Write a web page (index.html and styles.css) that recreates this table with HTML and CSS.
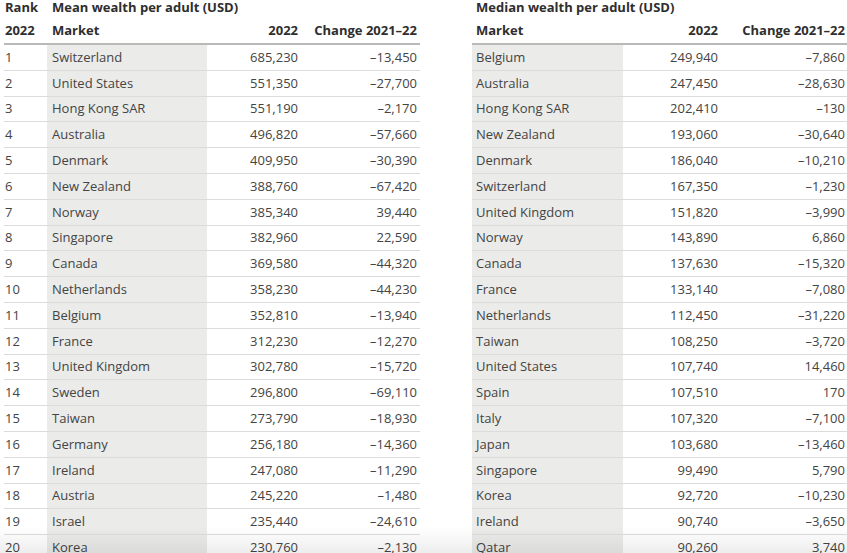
FILE: index.html
```html
<!DOCTYPE html>
<html lang="en">
<head>
<meta charset="utf-8">
<title>Wealth per adult</title>
<link rel="stylesheet" href="styles.css">
</head>
<body>
<div class="page">
  <section class="tbl tbl-mean">
    <div class="row title"><div class="c rank">Rank</div><div class="c span">Mean wealth per adult (USD)</div></div>
    <div class="row head"><div class="c rank">2022</div><div class="c mk">Market</div><div class="c num">2022</div><div class="c num">Change 2021–22</div></div>
    <div class="row"><div class="c rank">1</div><div class="c mk grey">Switzerland</div><div class="c num">685,230</div><div class="c num">–13,450</div></div>
    <div class="row"><div class="c rank">2</div><div class="c mk grey">United States</div><div class="c num">551,350</div><div class="c num">–27,700</div></div>
    <div class="row"><div class="c rank">3</div><div class="c mk grey">Hong Kong SAR</div><div class="c num">551,190</div><div class="c num">–2,170</div></div>
    <div class="row"><div class="c rank">4</div><div class="c mk grey">Australia</div><div class="c num">496,820</div><div class="c num">–57,660</div></div>
    <div class="row"><div class="c rank">5</div><div class="c mk grey">Denmark</div><div class="c num">409,950</div><div class="c num">–30,390</div></div>
    <div class="row"><div class="c rank">6</div><div class="c mk grey">New Zealand</div><div class="c num">388,760</div><div class="c num">–67,420</div></div>
    <div class="row"><div class="c rank">7</div><div class="c mk grey">Norway</div><div class="c num">385,340</div><div class="c num">39,440</div></div>
    <div class="row"><div class="c rank">8</div><div class="c mk grey">Singapore</div><div class="c num">382,960</div><div class="c num">22,590</div></div>
    <div class="row"><div class="c rank">9</div><div class="c mk grey">Canada</div><div class="c num">369,580</div><div class="c num">–44,320</div></div>
    <div class="row"><div class="c rank">10</div><div class="c mk grey">Netherlands</div><div class="c num">358,230</div><div class="c num">–44,230</div></div>
    <div class="row"><div class="c rank">11</div><div class="c mk grey">Belgium</div><div class="c num">352,810</div><div class="c num">–13,940</div></div>
    <div class="row"><div class="c rank">12</div><div class="c mk grey">France</div><div class="c num">312,230</div><div class="c num">–12,270</div></div>
    <div class="row"><div class="c rank">13</div><div class="c mk grey">United Kingdom</div><div class="c num">302,780</div><div class="c num">–15,720</div></div>
    <div class="row"><div class="c rank">14</div><div class="c mk grey">Sweden</div><div class="c num">296,800</div><div class="c num">–69,110</div></div>
    <div class="row"><div class="c rank">15</div><div class="c mk grey">Taiwan</div><div class="c num">273,790</div><div class="c num">–18,930</div></div>
    <div class="row"><div class="c rank">16</div><div class="c mk grey">Germany</div><div class="c num">256,180</div><div class="c num">–14,360</div></div>
    <div class="row"><div class="c rank">17</div><div class="c mk grey">Ireland</div><div class="c num">247,080</div><div class="c num">–11,290</div></div>
    <div class="row"><div class="c rank">18</div><div class="c mk grey">Austria</div><div class="c num">245,220</div><div class="c num">–1,480</div></div>
    <div class="row"><div class="c rank">19</div><div class="c mk grey">Israel</div><div class="c num">235,440</div><div class="c num">–24,610</div></div>
    <div class="row"><div class="c rank">20</div><div class="c mk grey">Korea</div><div class="c num">230,760</div><div class="c num">–2,130</div></div>
  </section>
  <section class="tbl tbl-median">
    <div class="row title"><div class="c span">Median wealth per adult (USD)</div></div>
    <div class="row head"><div class="c mk">Market</div><div class="c num">2022</div><div class="c num">Change 2021–22</div></div>
    <div class="row"><div class="c mk grey">Belgium</div><div class="c num">249,940</div><div class="c num">–7,860</div></div>
    <div class="row"><div class="c mk grey">Australia</div><div class="c num">247,450</div><div class="c num">–28,630</div></div>
    <div class="row"><div class="c mk grey">Hong Kong SAR</div><div class="c num">202,410</div><div class="c num">–130</div></div>
    <div class="row"><div class="c mk grey">New Zealand</div><div class="c num">193,060</div><div class="c num">–30,640</div></div>
    <div class="row"><div class="c mk grey">Denmark</div><div class="c num">186,040</div><div class="c num">–10,210</div></div>
    <div class="row"><div class="c mk grey">Switzerland</div><div class="c num">167,350</div><div class="c num">–1,230</div></div>
    <div class="row"><div class="c mk grey">United Kingdom</div><div class="c num">151,820</div><div class="c num">–3,990</div></div>
    <div class="row"><div class="c mk grey">Norway</div><div class="c num">143,890</div><div class="c num">6,860</div></div>
    <div class="row"><div class="c mk grey">Canada</div><div class="c num">137,630</div><div class="c num">–15,320</div></div>
    <div class="row"><div class="c mk grey">France</div><div class="c num">133,140</div><div class="c num">–7,080</div></div>
    <div class="row"><div class="c mk grey">Netherlands</div><div class="c num">112,450</div><div class="c num">–31,220</div></div>
    <div class="row"><div class="c mk grey">Taiwan</div><div class="c num">108,250</div><div class="c num">–3,720</div></div>
    <div class="row"><div class="c mk grey">United States</div><div class="c num">107,740</div><div class="c num">14,460</div></div>
    <div class="row"><div class="c mk grey">Spain</div><div class="c num">107,510</div><div class="c num">170</div></div>
    <div class="row"><div class="c mk grey">Italy</div><div class="c num">107,320</div><div class="c num">–7,100</div></div>
    <div class="row"><div class="c mk grey">Japan</div><div class="c num">103,680</div><div class="c num">–13,460</div></div>
    <div class="row"><div class="c mk grey">Singapore</div><div class="c num">99,490</div><div class="c num">5,790</div></div>
    <div class="row"><div class="c mk grey">Korea</div><div class="c num">92,720</div><div class="c num">–10,230</div></div>
    <div class="row"><div class="c mk grey">Ireland</div><div class="c num">90,740</div><div class="c num">–3,650</div></div>
    <div class="row"><div class="c mk grey">Qatar</div><div class="c num">90,260</div><div class="c num">3,740</div></div>
  </section>
  <div class="shade"></div>
</div>
</body>
</html>
```
FILE: styles.css
```css
html, body {
  margin: 0;
  padding: 0;
  background: #ffffff;
}
body {
  font-family: "Open Sans", "Noto Sans", sans-serif;
  font-size: 13px;
  color: #444444;
  overflow: hidden;
}
.page {
  position: relative;
  width: 847px;
  height: 553px;
  overflow: hidden;
  display: flex;
  align-items: flex-start;
  gap: 52px;
  padding-left: 4px;
  box-sizing: border-box;
}
.tbl {
  display: flex;
  flex-direction: column;
  flex: none;
}
.tbl-mean { width: 416px; }
.tbl-median { width: 375px; }
.row {
  flex: none;
  display: grid;
  height: 25.8px;
  box-sizing: border-box;
  border-bottom: 1px solid #dcdcdc;
  align-items: stretch;
}
.tbl-mean .row { grid-template-columns: 43px 160px 94px 119px; }
.tbl-median .row { grid-template-columns: 151px 98px 126px; }
.c {
  display: flex;
  align-items: center;
  white-space: nowrap;
  line-height: 1;
}
.rank { padding-left: 1px; }
.mk { padding-left: 5px; }
.tbl-median .mk { padding-left: 4px; }
.num {
  justify-content: flex-end;
  padding-right: 3px;
}
.tbl-median .num:last-child { padding-right: 2px; }
.grey { background: #ebebea; }
.row.title {
  height: 18px;
  border-bottom: none;
  font-weight: 700;
  color: #2e2e2e;
  align-items: start;
}
.row.title .c { height: 14px; }
.tbl-median .row.title .span { padding-left: 4px; }
.tbl-mean .row.title .span { grid-column: 2 / 5; padding-left: 5px; }
.tbl-median .row.title .span { grid-column: 1 / 4; }
.row.head {
  height: 27px;
  border-bottom: 2px solid #b9b9b9;
  font-weight: 700;
  color: #2e2e2e;
}
.shade {
  position: absolute;
  left: 0;
  right: 0;
  bottom: 0;
  height: 26px;
  background: linear-gradient(to bottom, rgba(0,0,0,0), rgba(0,0,0,0.07));
  pointer-events: none;
}
```
